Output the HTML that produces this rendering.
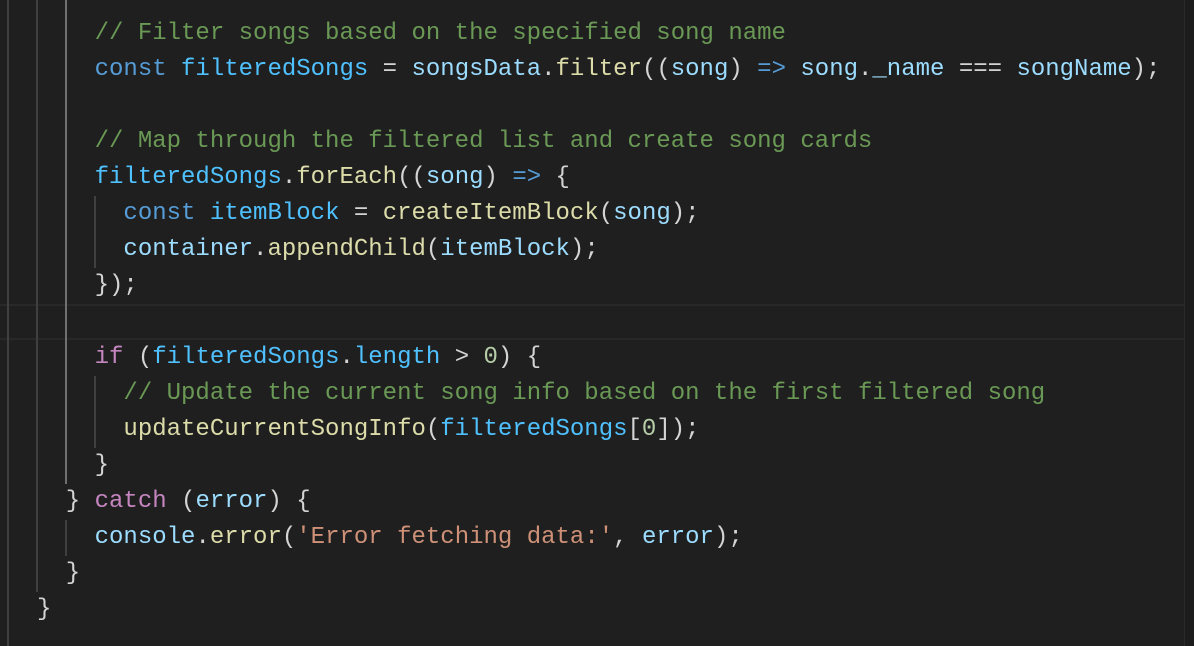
<!DOCTYPE html>
<html><head><style>
html,body{margin:0;padding:0;background:#1f1f1f;width:1194px;height:646px;overflow:hidden}
.ed{position:relative;width:1194px;height:646px;font-family:"Liberation Mono",monospace;font-size:24px;}
.l{position:absolute;left:37px;height:36px;line-height:36px;white-space:pre;color:#d4d4d4}
.g{position:absolute;width:2px;background:#404040}
.c{color:#6a9955}.k{color:#569cd6}.v{color:#4fc1ff}.p{color:#9cdcfe}.f{color:#dcdcaa}.m{color:#c586c0}.s{color:#ce9178}.n{color:#b5cea8}
</style></head><body><div class="ed">
<div style="position:absolute;left:0;top:304px;width:1184px;height:36px;border-top:2px solid #282828;border-bottom:2px solid #282828;box-sizing:border-box"></div>
<div style="position:absolute;left:1184px;top:0;width:10px;height:646px;background:#1c1c1c;border-left:1px solid #2a2a2a"></div>
<div class="g" style="left:7px;top:0;height:646px"></div>
<div class="g" style="left:36px;top:0;height:592px"></div>
<div class="g" style="left:65px;top:0;height:484px;background:#707070"></div>
<div class="g" style="left:65px;top:520px;height:36px"></div>
<div class="g" style="left:94px;top:196px;height:72px"></div>
<div class="g" style="left:94px;top:376px;height:72px"></div>
<div class="l" style="top:16px">    <span class="c">// Filter songs based on the specified song name</span></div>
<div class="l" style="top:52px">    <span class="k">const</span> <span class="v">filteredSongs</span> = <span class="p">songsData</span>.<span class="f">filter</span>((<span class="p">song</span>) <span class="k">=&gt;</span> <span class="p">song</span>.<span class="p">_name</span> === <span class="p">songName</span>);</div>
<div class="l" style="top:124px">    <span class="c">// Map through the filtered list and create song cards</span></div>
<div class="l" style="top:160px">    <span class="v">filteredSongs</span>.<span class="f">forEach</span>((<span class="p">song</span>) <span class="k">=&gt;</span> {</div>
<div class="l" style="top:196px">      <span class="k">const</span> <span class="v">itemBlock</span> = <span class="f">createItemBlock</span>(<span class="p">song</span>);</div>
<div class="l" style="top:232px">      <span class="p">container</span>.<span class="f">appendChild</span>(<span class="p">itemBlock</span>);</div>
<div class="l" style="top:268px">    });</div>
<div class="l" style="top:340px">    <span class="m">if</span> (<span class="v">filteredSongs</span>.<span class="v">length</span> &gt; <span class="n">0</span>) {</div>
<div class="l" style="top:376px">      <span class="c">// Update the current song info based on the first filtered song</span></div>
<div class="l" style="top:412px">      <span class="f">updateCurrentSongInfo</span>(<span class="v">filteredSongs</span>[<span class="n">0</span>]);</div>
<div class="l" style="top:448px">    }</div>
<div class="l" style="top:484px">  } <span class="m">catch</span> (<span class="p">error</span>) {</div>
<div class="l" style="top:520px">    <span class="p">console</span>.<span class="f">error</span>(<span class="s">'Error fetching data:'</span>, <span class="p">error</span>);</div>
<div class="l" style="top:556px">  }</div>
<div class="l" style="top:592px">}</div>
</div></body></html>
